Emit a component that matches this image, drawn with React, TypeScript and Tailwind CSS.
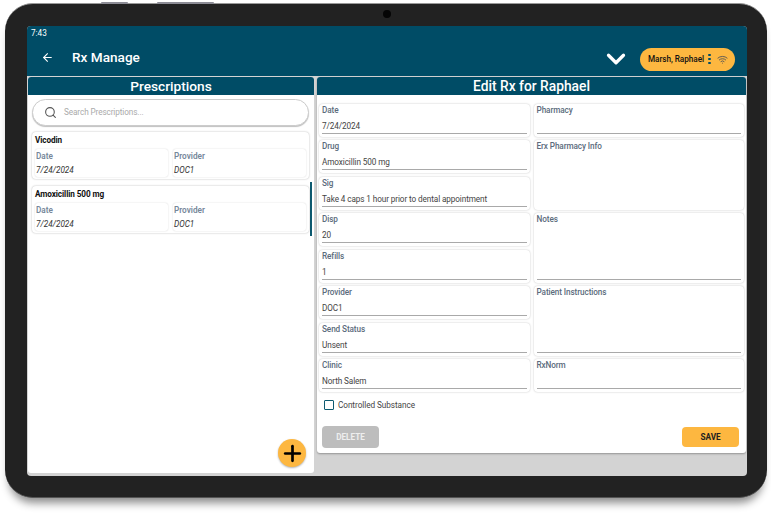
import { ArrowLeft, ChevronDown, Plus, Search, Wifi } from "lucide-react";

interface FieldProps {
  label: string;
  value?: string;
  rows?: string;
}

function Field({ label, value, rows = "row-span-1" }: FieldProps) {
  return (
    <div className={`${rows} flex flex-col rounded-[4px] bg-white px-[3px] pt-[1px] pb-[3px] shadow-[0_0_2px_rgba(0,0,0,0.25)]`}>
      <div className="h-[10px] text-[8.2px] leading-[10px] font-medium tracking-[-0.1px] text-[#5b6b7c]">{label}</div>
      <div className="flex-1" />
      <div className="h-[13px] border-b-[1.5px] border-[#a9a9a9] text-[8.2px] leading-[10px] tracking-[-0.1px] text-[#444]">{value}</div>
    </div>
  );
}

function RxCard({ name }: { name: string }) {
  return (
    <div className="h-[47px] rounded-[4px] bg-white px-[3px] pt-[3px] shadow-[0_0_2px_rgba(0,0,0,0.3)]">
      <div className="h-[14px] text-[8.2px] leading-[11px] font-bold tracking-[-0.1px] text-[#111]">{name}</div>
      <div className="grid grid-cols-2 gap-[5px]">
        {[
          ["Date", "7/24/2024"],
          ["Provider", "DOC1"],
        ].map(([label, value]) => (
          <div key={label} className="h-[28px] rounded-[3px] bg-white pt-[2px] pl-[1px] shadow-[0_0_1.5px_rgba(0,0,0,0.2)]">
            <div className="h-[14px] text-[8.2px] leading-[10px] font-semibold text-[#76879a]">{label}</div>
            <div className="text-[8.2px] leading-[10px] text-[#333] italic">{value}</div>
          </div>
        ))}
      </div>
    </div>
  );
}

export default function App() {
  return (
    <div className="h-[515px] w-[771px] overflow-hidden bg-white pt-[3px] pl-[5px] font-['Roboto',sans-serif]">
      <div className="relative h-[495px] w-[762px] rounded-[28px] border-t border-b border-t-[#999] border-b-[#555] bg-[#222] pt-[22px] pl-[22px] shadow-[0_9px_8px_-4px_rgba(0,0,0,0.45)]">
        <div className="absolute -top-[2px] left-[96px] h-[2px] w-[27px] rounded-t-[1px] bg-[#8d8d96]" />
        <div className="absolute -top-[2px] left-[152px] h-[2px] w-[57px] rounded-t-[1px] bg-[#8d8d96]" />
        <div className="absolute top-[6px] left-[378px] h-[8px] w-[8px] rounded-full bg-[#050505]" />

        <div className="flex h-[450px] w-[720px] flex-col overflow-hidden rounded-[4px] bg-[#d3d3d3]">
          <div className="h-[50px] shrink-0 bg-[#004c66] text-white">
            <div className="pt-[2px] pl-[4px] text-[8.2px] leading-[10px]">7:43</div>
            <div className="flex h-[39px] items-center">
              <ArrowLeft className="ml-[14px] h-[13px] w-[13px]" strokeWidth={2} />
              <div className="ml-[18px] text-[13.6px] font-medium">Rx Manage</div>
              <ChevronDown className="mt-[3px] mr-[9px] ml-auto h-[30px] w-[30px]" strokeWidth={2.6} />
              <div className="mt-[3px] mr-[12px] flex h-[23px] w-[95px] items-center rounded-full bg-[#fdb740] pl-[8px] text-[8.2px] font-medium tracking-[-0.05px] text-[#111]">
                Marsh, Raphael
                <div className="ml-[4px] flex flex-col gap-[1.5px]">
                  <span className="h-[2.5px] w-[2.5px] rounded-full bg-[#004c66]" />
                  <span className="h-[2.5px] w-[2.5px] rounded-full bg-[#004c66]" />
                  <span className="h-[2.5px] w-[2.5px] rounded-full bg-[#004c66]" />
                </div>
                <Wifi className="ml-[6px] h-[11px] w-[11px] text-[#555]" strokeWidth={2} />
              </div>
            </div>
          </div>

          <div className="flex flex-1 gap-[3px] pt-[1px] pl-[1px]">
            <div className="relative flex h-[396px] w-[286px] flex-col overflow-hidden rounded-[3px] bg-white">
              <div className="h-[18px] bg-[#004c66] text-center text-[13.7px] leading-[19px] font-medium text-white">Prescriptions</div>
              <div className="mx-[4px] mt-[4px] flex h-[27px] w-[277px] items-center rounded-full border border-[#ccc] bg-white shadow-[0_1px_1px_rgba(0,0,0,0.25)]">
                <Search className="ml-[11px] h-[13px] w-[13px] text-[#555]" strokeWidth={2} />
                <span className="ml-[7px] text-[8.2px] tracking-[-0.1px] text-[#aaa]">Search Prescriptions...</span>
              </div>
              <div className="mt-[3px] flex flex-col pr-[2px] pl-[4px]">
                <div className="py-[3px] pr-[3px]">
                  <RxCard name="Vicodin" />
                </div>
                <div className="border-r-2 border-[#0d5a70] pt-[4px] pr-[1px] pb-[3px]">
                  <RxCard name="Amoxicillin 500 mg" />
                </div>
              </div>
              <button className="absolute right-[8px] bottom-[6px] flex h-[28px] w-[28px] items-center justify-center rounded-full bg-[#fdb740] text-black shadow-[0_1px_2px_rgba(0,0,0,0.3)]">
                <Plus className="h-[25px] w-[25px]" strokeWidth={2.6} />
              </button>
            </div>

            <div className="flex h-[376px] w-[429px] flex-col overflow-hidden rounded-[3px] bg-white shadow-[0_1px_2px_rgba(0,0,0,0.3)]">
              <div className="h-[18px] bg-[#004c66] text-center text-[13.8px] leading-[19px] font-medium text-white">Edit Rx for Raphael</div>
              <div className="mt-[9px] grid grid-flow-col grid-cols-2 grid-rows-[repeat(8,33px)] gap-x-[4px] gap-y-[3.43px] px-[2px]">
                <Field label="Date" value="7/24/2024" />
                <Field label="Drug" value="Amoxicillin 500 mg" />
                <Field label="Sig" value="Take 4 caps 1 hour prior to dental appointment" />
                <Field label="Disp" value="20" />
                <Field label="Refills" value="1" />
                <Field label="Provider" value="DOC1" />
                <Field label="Send Status" value="Unsent" />
                <Field label="Clinic" value="North Salem" />
                <Field label="Pharmacy" />
                <div className="row-span-2 rounded-[4px] bg-white px-[3px] pt-[1px] shadow-[0_0_2px_rgba(0,0,0,0.25)]">
                  <div className="h-[10px] text-[8.2px] leading-[10px] font-medium tracking-[-0.1px] text-[#5b6b7c]">Erx Pharmacy Info</div>
                </div>
                <Field label="Notes" rows="row-span-2" />
                <Field label="Patient Instructions" rows="row-span-2" />
                <Field label="RxNorm" />
              </div>
              <label className="mt-[7px] ml-[7px] flex items-center gap-[4px] text-[8.2px] tracking-[-0.05px] text-[#444]">
                <span className="h-[10px] w-[10px] rounded-[1px] border-[1.5px] border-[#0d5a70]" />
                Controlled Substance
              </label>
              <div className="mt-[15px] flex items-center justify-between pr-[7px] pl-[5px]">
                <button className="h-[22px] w-[57px] rounded-[4px] bg-[#bdbdbd] text-[8.2px] font-bold text-[#eee]">DELETE</button>
                <button className="h-[20px] w-[57px] rounded-[4px] bg-[#fdb740] text-[8.2px] font-bold text-[#222]">SAVE</button>
              </div>
            </div>
          </div>
        </div>
      </div>
    </div>
  );
}
